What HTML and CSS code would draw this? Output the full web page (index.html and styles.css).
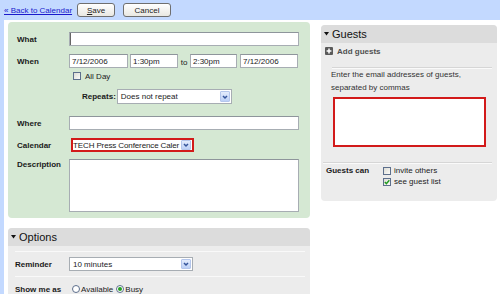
FILE: index.html
```html
<!DOCTYPE html>
<html lang="en">
<head>
<meta charset="utf-8">
<title>Edit event</title>
<link rel="stylesheet" href="styles.css">
</head>
<body>
<div class="page">
  <header class="topbar">
    <a class="back" href="#">« Back to Calendar</a>
    <button class="btn btn-save" type="button"><u>S</u>ave</button>
    <button class="btn btn-cancel" type="button">Cancel</button>
  </header>
  <main class="main">
    <div class="left">
      <section class="event-panel">
        <div class="row">
          <label class="lbl">What</label>
          <input class="field f-full f-focus" type="text" value="">
        </div>
        <div class="row row-when">
          <label class="lbl">When</label>
          <input class="field f-date" type="text" value="7/12/2006">
          <input class="field f-time" type="text" value="1:30pm">
          <span class="to">to</span>
          <input class="field f-time2" type="text" value="2:30pm">
          <input class="field f-date2" type="text" value="7/12/2006">
        </div>
        <div class="allday">
          <span class="cb"></span>
          <span class="cb-text">All Day</span>
        </div>
        <div class="repeats">
          <span class="lbl-inline">Repeats:</span>
          <div class="select sel-repeat">
            <span class="sel-text">Does not repeat</span>
            <span class="sel-arrow"><svg width="8" height="10" viewBox="0 0 8 10"><path d="M2 4 L4 6 L6 4" stroke="#34549a" stroke-width="1.5" fill="none"/></svg></span>
          </div>
        </div>
        <div class="row row-where">
          <label class="lbl">Where</label>
          <input class="field f-full" type="text" value="">
        </div>
        <div class="row row-cal">
          <label class="lbl">Calendar</label>
          <div class="select sel-cal">
            <span class="sel-text">TECH Press Conference Caler</span>
            <span class="sel-arrow"><svg width="8" height="10" viewBox="0 0 8 10"><path d="M2 4 L4 6 L6 4" stroke="#34549a" stroke-width="1.5" fill="none"/></svg></span>
          </div>
        </div>
        <div class="row row-desc">
          <label class="lbl lbl-top">Description</label>
          <textarea class="field f-area"></textarea>
        </div>
      </section>

      <section class="options-panel">
        <div class="panel-head">
          <svg class="tri" width="5" height="4" viewBox="0 0 5 4"><polygon points="0,0 5,0 2.5,3.5" fill="#111"/></svg>
          <span class="head-title">Options</span>
        </div>
        <div class="opt-body">
          <div class="opt-row">
            <span class="opt-lbl">Reminder</span>
            <div class="select sel-remind">
              <span class="sel-text">10 minutes</span>
              <span class="sel-arrow"><svg width="8" height="10" viewBox="0 0 8 10"><path d="M2 4 L4 6 L6 4" stroke="#34549a" stroke-width="1.5" fill="none"/></svg></span>
            </div>
          </div>
          <div class="opt-row">
            <span class="opt-lbl">Show me as</span>
            <span class="radio"></span><span class="radio-text">Available</span>
            <span class="radio on"></span><span class="radio-text">Busy</span>
          </div>
        </div>
      </section>
    </div>

    <aside class="guests-panel">
      <div class="panel-head">
        <svg class="tri" width="5" height="4" viewBox="0 0 5 4"><polygon points="0,0 5,0 2.5,3.5" fill="#111"/></svg>
        <span class="head-title">Guests</span>
      </div>
      <div class="add-row">
        <svg class="add-icon" width="8" height="8" viewBox="0 0 8 8"><rect width="8" height="8" rx="1" fill="#5a5a5a"/><path d="M4 1.6 V6.4 M1.6 4 H6.4" stroke="#fff" stroke-width="1.5"/></svg>
        <span class="add-text">Add guests</span>
      </div>
      <div class="sep sep-a"></div>
      <p class="hint">Enter the email addresses of guests,<br>separated by commas</p>
      <textarea class="guest-box"></textarea>
      <div class="sep sep-b"></div>
      <div class="guests-can">
        <span class="gc-lbl">Guests can</span>
        <div class="gc-opts">
          <div class="gc-opt"><span class="cb"></span><span class="cb-text">invite others</span></div>
          <div class="gc-opt"><span class="cb checked"><svg width="6" height="6" viewBox="0 0 6 6"><path d="M0.8 3 L2.4 4.6 L5.3 1.2" stroke="#1f9a1f" stroke-width="1.4" fill="none"/></svg></span><span class="cb-text">see guest list</span></div>
        </div>
      </div>
    </aside>
  </main>
</div>
</body>
</html>
```
FILE: styles.css
```css
* { box-sizing: border-box; }
html, body { margin: 0; padding: 0; }
body {
  width: 500px;
  height: 294px;
  overflow: hidden;
  background: #fff;
  font-family: "Liberation Sans", Arial, sans-serif;
  font-size: 8px;
  color: #222;
}
.page { display: flex; flex-direction: column; height: 294px; }

/* top bar */
.topbar {
  display: flex;
  align-items: center;
  height: 20px;
  flex: none;
  background: #c3d9ff;
  padding-left: 4px;
}
.back { color: #1a1acc; text-decoration: underline; font-size: 8px; }
.btn {
  height: 14px;
  padding: 0;
  border: 1px solid #6f6f6f;
  border-radius: 3px;
  background: linear-gradient(#ffffff, #e9e8e2);
  font: 8px "Liberation Sans", Arial, sans-serif;
  color: #222;
}
.btn-save { width: 38px; margin-left: 5px; }
.btn-cancel { width: 48px; margin-left: 8px; }

/* main */
.main {
  flex: 1;
  display: flex;
  align-items: flex-start;
  gap: 11px;
  border-left: 4px solid #c3d9ff;
  padding: 2px 0 0 4px;
}
.left { width: 302px; flex: none; display: flex; flex-direction: column; gap: 10px; }

/* green event panel */
.event-panel {
  background: #d5e8d3;
  border-radius: 4px;
  padding: 10px 11px 6px 9px;
  display: flex;
  flex-direction: column;
}
.row { display: flex; align-items: center; }
.lbl { width: 52px; flex: none; font-weight: bold; color: #1a1a1a; }
.lbl-top { align-self: flex-start; padding-top: 1px; }
.field {
  height: 14px;
  margin: 0;
  padding: 0 2px;
  border: 1px solid #a7adb3;
  border-top-color: #8e959b;
  background: #fff;
  font: 8px "Liberation Sans", Arial, sans-serif;
  color: #222;
  outline: none;
}
.f-full { width: 230px; }
.f-focus { box-shadow: inset 1px 0 0 #666; }
.row-when { margin-top: 8px; }
.f-date { width: 59px; }
.f-time { width: 48px; margin-left: 2px; }
.to { width: 12px; text-align: center; padding-top: 3px; }
.f-time2 { width: 47px; }
.f-date2 { width: 58px; margin-left: 3px; }

.allday { display: flex; align-items: center; height: 10px; margin-top: 3px; padding-left: 56px; }
.cb {
  width: 8px;
  height: 8px;
  flex: none;
  display: inline-flex;
  align-items: center;
  justify-content: center;
  border: 1px solid #5d6f8c;
  background: linear-gradient(135deg, #dcdcd5, #fbfbf9);
}
.cb-text { margin-left: 4px; }

.repeats { display: flex; align-items: center; margin-top: 8px; padding-left: 65px; }
.lbl-inline { font-weight: bold; margin-right: 1px; color: #1a1a1a; }

.select {
  display: flex;
  align-items: center;
  height: 15px;
  padding: 1px;
  border: 1px solid #a7adb3;
  background: #fff;
}
.sel-text { flex: 1; min-width: 0; padding-left: 2px; white-space: nowrap; }
.sel-arrow {
  width: 10px;
  height: 100%;
  flex: none;
  display: flex;
  align-items: center;
  justify-content: center;
  border: 1px solid #b4c6ec;
  border-radius: 1px;
  background: linear-gradient(#e4ecfc, #bcd0f6);
}
.sel-repeat { width: 115px; }

.row-where { margin-top: 12px; }
.row-cal { margin-top: 8px; }
.sel-cal { width: 123px; height: 14px; margin-left: 2px; border: 2px solid #d21a1a; padding: 0 1px 0 0; }
.sel-cal .sel-text { padding-left: 0; letter-spacing: -0.12px; }
.row-desc { margin-top: 7px; align-items: flex-start; }
.f-area { width: 230px; height: 53px; resize: none; }

/* gray panels */
.options-panel { background: #ececec; border-radius: 4px 4px 0 0; height: 80px; }
.panel-head {
  display: flex;
  align-items: center;
  height: 18px;
  padding-left: 3px;
  background: #dcdcdc;
  border-radius: 4px 4px 0 0;
}
.tri { flex: none; }
.head-title { font-size: 11px; color: #111; margin-left: 3px; }
.opt-body { padding: 5px 5px 0 7px; }
.opt-row {
  display: flex;
  align-items: center;
  height: 25px;
  padding: 0;
  border-top: 1px solid #f9f9f9;
}
.opt-lbl { width: 54px; flex: none; font-weight: bold; color: #1a1a1a; }
.sel-remind { width: 124px; height: 14px; }
.radio {
  width: 8px;
  height: 8px;
  flex: none;
  margin-left: 3px;
  border: 1px solid #5d6f8c;
  border-radius: 50%;
  background: #fff;
  display: inline-flex;
  align-items: center;
  justify-content: center;
}
.radio.on::after { content: ""; width: 4px; height: 4px; border-radius: 50%; background: #23a023; }
.radio-text { margin-left: 1px; }

.guests-panel {
  width: 176px;
  flex: none;
  margin-top: 3px;
  background: #ececec;
  border-radius: 4px;
  padding-bottom: 12px;
}
.add-row { display: flex; align-items: center; height: 16px; padding-left: 4px; }
.add-icon { flex: none; }
.add-text { margin-left: 4px; font-weight: bold; color: #505050; }
.sep { height: 1px; background: #d6d6d6; box-shadow: 0 1px 0 #fafafa; }
.sep-a { margin: 8px 5px 0 11px; }
.hint { margin: 0; padding-left: 10px; line-height: 13px; color: #333; }
.guest-box {
  display: block;
  width: 153px;
  height: 50px;
  margin: 3px 0 0 12px;
  border: 2px solid #d21a1a;
  background: #fff;
  resize: none;
  outline: none;
}
.sep-b { margin: 15px 5px 0 2px; }
.guests-can { display: flex; align-items: flex-start; padding: 4px 0 0 5px; }
.gc-lbl { width: 57px; flex: none; font-weight: bold; line-height: 8px; color: #1a1a1a; }
.gc-opts { display: flex; flex-direction: column; }
.gc-opt { display: flex; height: 11px; align-items: flex-start; }
.gc-opt .cb-text { line-height: 8px; margin-left: 3px; }
```
